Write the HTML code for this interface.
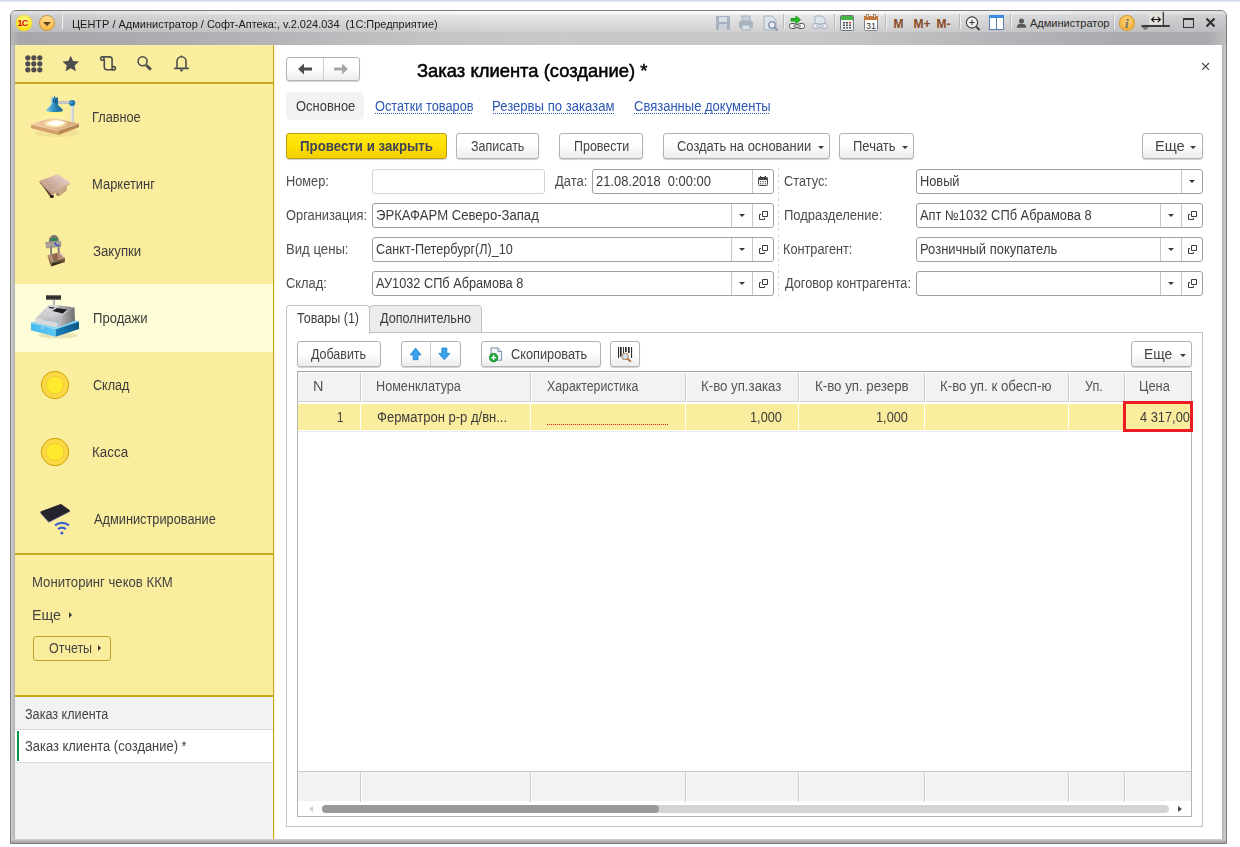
<!DOCTYPE html>
<html lang="ru">
<head>
<meta charset="utf-8">
<title>Заказ клиента (создание) *</title>
<style>
html,body{margin:0;padding:0;}
body{width:1240px;height:847px;overflow:hidden;background:#fff;position:relative;
 font-family:"Liberation Sans",sans-serif;font-size:13px;color:#333;}
.abs,.abs *{box-sizing:border-box;}
.a{position:absolute;white-space:nowrap;}
#topstrip{left:0;top:0;width:1240px;height:2px;background:linear-gradient(#c6d0e5,#f2f4f9);}
#win{left:10px;top:10px;width:1217px;height:834px;border:1px solid #7d7d7d;border-radius:6px 6px 0 0;
 background:linear-gradient(90deg,#d4d4d4 0,#c6c6c6 1px,#bcbcbc 3px,#a9aaac 4px,#a9aaac 1211px,#b7b8ba 1212px,#c1c1c1 1213px,#cdcdcd 1215px);box-sizing:border-box;overflow:hidden;}
#tb1{left:0;top:0;width:1215px;height:21px;background:linear-gradient(90deg,rgba(110,112,125,.22) 0,rgba(110,112,125,.10) 250px,rgba(0,0,0,0) 480px,rgba(0,0,0,0) 820px,rgba(110,112,125,.12) 1050px,rgba(110,112,125,.20) 1215px),linear-gradient(#fcfcfc 0,#f7f7f7 3px,#e7e7e7 4px,#cfcfd0 100%);}
#tb2{left:0;top:21px;width:1215px;height:13px;background:linear-gradient(90deg,#b9babc 0,#a6a7ab 8px,#a9aaae 100px,#b4b4b8 250px,#c4c4c6 420px,#c9c9c9 550px,#c8c8c8 800px,#b4b4b8 1000px,#a9aaae 1120px,#a9aaae 1195px,#bdbdbf 1215px);}
#botframe{left:0;top:828px;width:1215px;height:4px;background:linear-gradient(#d4d4d4,#b2b2b2 50%,#a2a2a2);}
#client{left:15px;top:45px;width:1207px;height:794px;background:#fff;overflow:hidden;}
/* sidebar */
#side{left:0;top:0;width:258px;height:650px;background:#fbed9e;}
#sideb{left:258px;top:0;width:2px;height:794px;background:linear-gradient(90deg,#c9a81c 0,#c9a81c 1px,#f3e6b0 1px,#fdf9e8 2px);}
.hline{background:#c9a81c;height:2px;left:0;width:258px;}
.sec{left:78px;font-size:13px;color:#333;letter-spacing:0.1px;}
#sel{left:0;top:239px;width:258px;height:68px;background:#fffdd8;}
#opened{left:0;top:652px;width:258px;height:142px;background:#f2f2f2;}
/* main */
.btn{height:26px;border:1px solid #b3b3b3;border-radius:3px;background:linear-gradient(#fff,#fff 45%,#ececec);
 box-shadow:0 1px 1px rgba(0,0,0,.18);font-size:13px;color:#444;text-align:center;line-height:23px;letter-spacing:.2px;}
.lbl{color:#4d4d4d;font-size:13px;letter-spacing:0px;}
.fld{height:25px;border:1px solid #a0a0a0;border-radius:3px;background:#fff;font-size:13px;color:#333;line-height:23px;padding-left:4px;}
.fbtn{top:0;width:1px;height:23px;background:#c8c8c8;}
.lnk{color:#2a5db0;font-size:13px;border-bottom:1px dotted #2a5db0;line-height:14px;}
.th{top:0;height:28px;line-height:28px;color:#4d4d4d;font-size:13px;}
.cd{top:0;width:1px;height:430px;background:linear-gradient(#fff 0,#fff 1px,#cdcdcd 1px,#cdcdcd 30px,#fff 30px,#fff 59px,transparent 59px,transparent 400px,#cdcdcd 400px);}
.cd2{top:0;width:1px;height:430px;background:linear-gradient(#fff 0,#fff 30px,transparent 30px,transparent 400px,#fbfbfb 400px);}
.t{white-space:pre;transform-origin:0 0;}
.tri{width:0;height:0;border-left:3px solid transparent;border-right:3px solid transparent;border-top:3px solid #3a3a3a;}
</style>
</head>
<body>
<div id="topstrip" class="a"></div>
<div id="win" class="a abs">
  <div id="tb1" class="a"></div>
  <div id="tb2" class="a"></div>
  <div id="botframe" class="a"></div>
</div>
<div id="titlebar" class="a abs" style="left:0;top:0;width:1240px;height:45px;">

<!-- 1C logo -->
<div class="a" style="left:16px;top:15px;width:16px;height:16px;border-radius:50%;background:radial-gradient(circle at 50% 35%,#fff9a0,#ffe92a 55%,#f6cf00);box-shadow:0 0 1px #d8b800;"></div>
<div class="a" style="left:39px;top:15px;width:16px;height:16px;border-radius:50%;background:linear-gradient(#ffdf94,#ffb640);border:1px solid #c8982e;"></div>
<div class="a" style="left:43px;top:22px;width:0;height:0;border-left:4px solid transparent;border-right:4px solid transparent;border-top:4px solid #5b4320;"></div>
<div class="a" style="left:61px;top:14px;width:1px;height:15px;background:#c6c6c8;"></div>
<div class="a" style="left:62px;top:14px;width:1px;height:15px;background:#f3f3f3;"></div>
<!-- right side icons -->
<svg class="a" style="left:714px;top:14px;" width="260" height="18" viewBox="0 0 260 18">
 <!-- save disabled -->
 <g fill="#a7b1bf" stroke="none">
  <path d="M2 2h13l1 1v13H2z"/><rect x="5" y="3" width="8" height="5" fill="#d9dee5"/><rect x="5" y="10" width="8" height="6" fill="#c9d0da"/>
 </g>
 <!-- print disabled -->
 <g fill="#aab3c0"><rect x="28" y="2" width="8" height="5" fill="#c9d1dc" stroke="#a4b1c2"/><rect x="25" y="7" width="14" height="7" rx="1.5"/><rect x="28" y="11" width="8" height="5" fill="#d8dee6" stroke="#a4b1c2"/></g>
 <!-- preview disabled -->
 <g><path d="M50 2h8l4 4v10H50z" fill="#dfe4ea" stroke="#a4b1c2"/><circle cx="58" cy="11" r="3.2" fill="#eef1f5" stroke="#8d9cb0" stroke-width="1.5"/><path d="M60.5 13.5l3 3" stroke="#8d9cb0" stroke-width="2"/></g>
 <rect x="69" y="0" width="1" height="15" fill="#bbbbbe"/><rect x="70" y="0" width="1" height="15" fill="#efefef"/>
 <!-- link green -->
 <g><path d="M79 2v-0h0M77 4.5h5v-2.5l4.5 3.8l-4.500 3.800v-2.500h-5z" fill="#27c024" stroke="#0f8a10" stroke-width=".8"/><rect x="75.500" y="9.500" width="7" height="5" rx="2" fill="#f4f4f4" stroke="#555"/><rect x="83.500" y="9.500" width="7" height="5" rx="2" fill="#f4f4f4" stroke="#555"/><rect x="80" y="11" width="6" height="2" fill="#fff" stroke="#555" stroke-width=".8"/></g>
 <!-- link disabled -->
 <g><path d="M101 2h7l3 3v5h-10z" fill="#dfe4ea" stroke="#a9b4c3"/><rect x="98.500" y="9.500" width="7" height="5" rx="2" fill="#e2e6ec" stroke="#a3afbf"/><rect x="106.500" y="9.500" width="7" height="5" rx="2" fill="#e2e6ec" stroke="#a3afbf"/><rect x="103" y="11" width="6" height="2" fill="#eef1f5" stroke="#a3afbf" stroke-width=".8"/></g>
 <rect x="120" y="0" width="1" height="15" fill="#bbbbbe"/><rect x="121" y="0" width="1" height="15" fill="#efefef"/>
 <!-- calculator -->
 <g><rect x="126.500" y="1.500" width="13" height="15" rx="1" fill="#eef0f2" stroke="#6f7780"/><rect x="127" y="2" width="12" height="4" fill="#46b24a"/><g fill="#555"><rect x="129" y="8" width="2" height="1.500"/><rect x="132" y="8" width="2" height="1.500"/><rect x="129" y="10.500" width="2" height="1.500"/><rect x="132" y="10.500" width="2" height="1.500"/><rect x="129" y="13" width="2" height="1.500"/><rect x="132" y="13" width="2" height="1.500"/><rect x="135" y="10.500" width="2" height="1.500"/><rect x="135" y="13" width="2" height="1.500"/></g><rect x="135" y="8" width="2" height="1.500" fill="#e03030"/></g>
 <!-- calendar -->
 <g><rect x="150.500" y="2.500" width="13" height="14" rx="1" fill="#fdfdfd" stroke="#7a7f86"/><rect x="150" y="2" width="14" height="4" fill="#c9793a"/><rect x="152.500" y="0.500" width="2" height="3" fill="#e8e8e8" stroke="#8a5a30" stroke-width=".6"/><rect x="159.500" y="0.500" width="2" height="3" fill="#e8e8e8" stroke="#8a5a30" stroke-width=".6"/><text x="157" y="14.500" font-family="Liberation Sans, sans-serif" font-size="9" fill="#333" text-anchor="middle">31</text></g>
 <rect x="171" y="0" width="1" height="15" fill="#bbbbbe"/><rect x="172" y="0" width="1" height="15" fill="#efefef"/>
 <g font-family="Liberation Sans, sans-serif" font-weight="bold" font-size="12" fill="#8a4a1e"><text x="179.500" y="14">M</text><text x="199.500" y="14">M+</text><text x="222.500" y="14">M-</text></g>
 <rect x="245" y="0" width="1" height="15" fill="#bbbbbe"/><rect x="246" y="0" width="1" height="15" fill="#efefef"/>
</svg>
<svg class="a" style="left:964px;top:13px;overflow:visible;" width="260" height="20" viewBox="0 0 260 20">
 <!-- zoom -->
 <g><circle cx="8" cy="9.500" r="5.600" fill="#f4f4f4" stroke="#3d3d3d" stroke-width="1.100"/><path d="M5.300 9.500h5.400M8 6.800v5.400" stroke="#3d3d3d" stroke-width="1.100"/><path d="M12.200 13.700l3.300 3.300" stroke="#3d3d3d" stroke-width="1.900"/></g>
 <!-- panels -->
 <g><rect x="25.500" y="2.500" width="14" height="14" fill="#fff" stroke="#5a7fb0"/><rect x="25" y="2" width="15" height="3" fill="#3b8be0"/><rect x="32" y="5" width="1" height="11" fill="#5a7fb0"/></g>
 <rect x="46" y="1" width="1" height="15" fill="#bbbbbe"/><rect x="47" y="1" width="1" height="15" fill="#efefef"/>
 <!-- user -->
 <g fill="#5a5a5a"><circle cx="57.500" cy="8" r="2.500"/><path d="M52.800 14.800c0-3.200 1.800-4 4.700-4s4.700 .8 4.700 4z"/></g>
 <text x="66" y="14" font-family="Liberation Sans, sans-serif" font-size="11" fill="#2a2a2a" textLength="79.500" lengthAdjust="spacingAndGlyphs">Администратор</text>
 <rect x="149" y="1" width="1" height="15" fill="#bbbbbe"/><rect x="150" y="1" width="1" height="15" fill="#efefef"/>
 <!-- info -->
 <g><circle cx="162.900" cy="10" r="7.700" fill="#f5b642" stroke="#d09a35" stroke-width=".9"/><circle cx="162.900" cy="8.500" r="5.500" fill="#fbd27a" opacity=".55"/><text x="162.700" y="14.600" font-family="Liberation Serif, serif" font-weight="bold" font-style="italic" font-size="13" fill="#6e6e6e" text-anchor="middle">i</text></g>
 <!-- artefact -->
 <g><rect x="185.200" y="-.6" width="13.600" height="12.300" fill="#e4e1da"/><rect x="177.500" y="12" width="28.300" height="2" fill="#3c3c3c"/><rect x="198.700" y="-1.200" width="1.300" height="14" fill="#3c3c3c"/><path d="M177.500 14h7.500l-3.750 3.200z" fill="#7a7a7a"/><path d="M187.600 6.500h8.800M190.300 3.900l-2.700 2.600l2.700 2.600M193.700 3.900l2.700 2.600l-2.700 2.600" stroke="#111" stroke-width="1.100" fill="none"/></g>
 <!-- maximize -->
 <g><rect x="219.500" y="6" width="10" height="8.500" fill="none" stroke="#333"/><rect x="219" y="5" width="11" height="2" fill="#333"/></g>
 <!-- close -->
 <path d="M242.500 5.500l8 8M250.500 5.500l-8 8" stroke="#333" stroke-width="2.200"/>
</svg>

</div>
<div id="client" class="a abs">
  <div id="side" class="a">

<!-- toolbar icons -->
<svg class="a" style="left:8px;top:8px;" width="180" height="22" viewBox="0 0 180 22">
 <g fill="#4d4d4d">
  <circle cx="4.800" cy="4.800" r="2.600"/><circle cx="10.800" cy="4.800" r="2.600"/><circle cx="16.800" cy="4.800" r="2.600"/>
  <circle cx="4.800" cy="10.800" r="2.600"/><circle cx="10.800" cy="10.800" r="2.600"/><circle cx="16.800" cy="10.800" r="2.600"/>
  <circle cx="4.800" cy="16.800" r="2.600"/><circle cx="10.800" cy="16.800" r="2.600"/><circle cx="16.800" cy="16.800" r="2.600"/>
  <path d="M47.700 2.800l2.400 5.200l5.900 .6l-4.400 3.900l1.300 5.700l-5.200-3l-5.200 3l1.300-5.700l-4.400-3.900l5.900-.6z"/>
 </g>
 <g fill="none" stroke="#4d4d4d" stroke-width="1.600" stroke-linejoin="round" stroke-linecap="round">
  <circle cx="79.300" cy="5.500" r="1.700"/>
  <path d="M80 3.900H86.800a2.300 2.300 0 0 1 2.300 2.300V13.600"/>
  <path d="M81.300 7V14a2.800 2.800 0 0 0 2.800 2.800H90"/>
  <circle cx="90.700" cy="15.300" r="1.700"/>
  <circle cx="119.600" cy="8.300" r="4.500"/>
 </g>
 <path d="M123.300 12.300l4.600 4.300" stroke="#4d4d4d" stroke-width="2.900"/>
 <g><path d="M154 14.800v-6.600a4.500 4.500 0 0 1 9 0v6.600" fill="none" stroke="#4d4d4d" stroke-width="1.600"/><path d="M152 15.400h13" stroke="#4d4d4d" stroke-width="1.900" stroke-linecap="round"/><path d="M156.300 16.600h4.400l-2.200 2.400z" fill="#4d4d4d"/><path d="M157.300 3.800l1.200-1.800l1.200 1.800z" fill="#4d4d4d"/></g>
</svg>
<div class="a hline" style="top:37px;"></div>
<div id="sel" class="a"></div>
<!-- Главное -->
<svg class="a" style="left:16px;top:48px;" width="48" height="48" viewBox="0 0 48 48">
 <defs>
  <linearGradient id="lg1" x1="0" x2="1"><stop offset="0" stop-color="#8fd0ea"/><stop offset=".45" stop-color="#2f8fc0"/><stop offset="1" stop-color="#14608f"/></linearGradient>
  <linearGradient id="lg2" x1="0" y1="0" x2="0" y2="1"><stop offset="0" stop-color="#fff27a" stop-opacity=".95"/><stop offset="1" stop-color="#fff9c0" stop-opacity=".5"/></linearGradient>
  <linearGradient id="lg3" x1="0" x2="1"><stop offset="0" stop-color="#f3c9a6"/><stop offset="1" stop-color="#d6a873"/></linearGradient>
  <radialGradient id="rg1" cx=".5" cy=".5" r=".5"><stop offset="0" stop-color="#fffef0"/><stop offset=".6" stop-color="#fbeab0"/><stop offset="1" stop-color="#e9c08e" stop-opacity="0"/></radialGradient>
 </defs>
 <ellipse cx="26" cy="40" rx="22" ry="4" fill="#e8d58a" opacity=".5"/>
 <path d="M0 31.400L20 24.600L48 30.400L27.300 37.600z" fill="url(#lg3)"/>
 <path d="M0 31.400L27.300 37.600V42L0 35.200z" fill="#d79f6d"/>
 <path d="M27.300 37.600L48 30.400V34.200L27.300 42z" fill="#b98752"/>
 <path d="M0 31.400L27.300 37.600L48 30.400" fill="none" stroke="#f1d3b0" stroke-width=".7"/>
 <ellipse cx="24" cy="30.500" rx="14" ry="5" fill="url(#rg1)"/>
 <path d="M15.500 30.500L25 27.300L35 29.300L25 33z" fill="#fff"/>
 <path d="M15 18.400L32 18.400L35 26.500L11.700 26.500z" fill="url(#lg2)"/>
 <rect x="40.300" y="12" width="2.600" height="17" fill="#c9c9d2"/><rect x="40.300" y="12" width="1" height="17" fill="#eeeef4"/>
 <rect x="27" y="8.300" width="13" height="2.400" fill="#cfcfd8" stroke="#9a9aa8" stroke-width=".4"/>
 <circle cx="41.200" cy="10" r="3.100" fill="#1f78ad"/><circle cx="40.400" cy="9.200" r="1.300" fill="#4aa4d4"/>
 <path d="M20.200 4.500h6.800v7.500h-6.800z" fill="url(#lg1)"/><rect x="22.300" y="6" width=".9" height="4" fill="#0d4468"/><rect x="24.300" y="6" width=".9" height="4" fill="#0d4468"/><rect x="23.200" y="3" width=".8" height="2" fill="#1f78ad"/>
 <path d="M20.200 11.500C19 14 16 15 15 17.500C15 19.500 32 19.500 32 17.500C31 15 28.200 14 27 11.500z" fill="url(#lg1)"/>
</svg>
<!-- Маркетинг -->
<svg class="a" style="left:16px;top:115px;" width="48" height="48" viewBox="0 0 48 48">
 <defs><linearGradient id="mg1" x1="0" y1="1" x2="1" y2="0"><stop offset="0" stop-color="#ad8673"/><stop offset=".55" stop-color="#d2b3a4"/><stop offset="1" stop-color="#eddcd3"/></linearGradient></defs>
 <path d="M25.300 32.200L36 25.500L35.600 30.800L28.200 36.300L25.300 35.300z" fill="#c6a884"/>
 <path d="M25.300 32.200L28.200 33.400V36.300L25.300 35.300z" fill="#a88a68"/>
 <path d="M10.300 24.300L20.800 35.300L22.500 35V37L19.800 37.600z" fill="#4a3428"/>
 <path d="M19.300 35.600h3.200v2.200h-3.200z" fill="#17110d"/>
 <path d="M8.500 21.100L20.800 33.800V35.600L8.800 23z" fill="#8a6a58"/>
 <path d="M20.800 33.800L38.700 22.700V24.300L20.800 35.600z" fill="#c4a58e"/>
 <path d="M9 20.800Q8 21.300 9 22.300L20 33.500Q21 34.300 22 33.600L38.200 23.300Q39.200 22.500 38.200 21.800L27.500 14.600Q26.700 14 25.700 14.500z" fill="url(#mg1)"/>
 <path d="M11.500 21.600L21 31.300L34.500 22.600" fill="none" stroke="#ecdcd2" stroke-width=".6" opacity=".75"/>
</svg>
<!-- Закупки -->
<svg class="a" style="left:16px;top:182px;" width="48" height="48" viewBox="0 0 48 48">
 <defs><linearGradient id="zg1" x1="0" y1="0" x2="0" y2="1"><stop offset="0" stop-color="#9c7c5c"/><stop offset=".45" stop-color="#5a4330"/><stop offset="1" stop-color="#21160e"/></linearGradient></defs>
 <path d="M17.800 15C17.800 6 27.800 6 27.800 14z" fill="#7a7772"/>
 <rect x="20" y="11.300" width="6" height="2.600" fill="#1f8a50"/>
 <path d="M14.600 15.600L29.600 14.200L30 19.300L15.600 21z" fill="#aaa196" stroke="#777" stroke-width=".5"/>
 <path d="M24.400 15l1.500 2.200h-3z" fill="#2b3fc0"/><rect x="24.500" y="17.800" width="4" height="1.200" fill="#3248c8"/>
 <rect x="19.200" y="20" width="1.800" height="12" fill="#7d7a76"/><rect x="26.700" y="19.500" width="1.900" height="9" fill="#7d7a76"/>
 <path d="M16.300 28.200L29.300 25.300L34.100 30.500L20.500 35.500z" fill="#b98f78"/>
 <path d="M21 27.200L26.500 26L27 33L22.500 34.500z" fill="#8d6850"/>
 <path d="M29.300 25.300L34.100 30.500V31.500L29 26.500z" fill="#f3f0ea"/>
 <path d="M16.300 28.200L20.500 35.500L20.200 39.600L18.900 36.300z" fill="#7a5a48"/>
 <path d="M20.500 35.500L34.100 30.500L33.800 35L20.200 39.600z" fill="url(#zg1)"/>
 <path d="M21 35.800L27 33.600" stroke="#5a9a5a" stroke-width=".8"/>
</svg>
<!-- Продажи -->
<svg class="a" style="left:16px;top:249px;" width="48" height="48" viewBox="0 0 48 48">
 <defs>
  <linearGradient id="pg1" x1="0" x2="1"><stop offset="0" stop-color="#44b9ec"/><stop offset="1" stop-color="#5fc8f4"/></linearGradient>
  <linearGradient id="pg2" x1="0" x2="1"><stop offset="0" stop-color="#1a7fbb"/><stop offset="1" stop-color="#0c5688"/></linearGradient>
  <linearGradient id="pg3" x1="0" y1="0" x2="1" y2="1"><stop offset="0" stop-color="#e4e4e6"/><stop offset="1" stop-color="#a9aaad"/></linearGradient>
  <linearGradient id="pg4" x1="0" x2="1"><stop offset="0" stop-color="#c6c6c9"/><stop offset=".45" stop-color="#9d9da0"/><stop offset="1" stop-color="#6c6c6f"/></linearGradient><linearGradient id="pg6" x1="0" x2="1"><stop offset="0" stop-color="#b9b9bc"/><stop offset="1" stop-color="#7f7f82"/></linearGradient>
  <linearGradient id="pg5" x1="0" y1="0" x2="0" y2="1"><stop offset="0" stop-color="#555"/><stop offset=".5" stop-color="#222"/><stop offset="1" stop-color="#666"/></linearGradient>
 </defs>
 <ellipse cx="27" cy="41.500" rx="20" ry="3" fill="#d8d29a" opacity=".55"/>
 <path d="M0 28.800L22 22L48 27.200L24.700 35z" fill="#6fd0f6"/>
 <path d="M0 28.800L24.700 35V42.800L0 36.300z" fill="url(#pg1)"/>
 <path d="M24.700 35L48 27.200V35L24.700 42.800z" fill="url(#pg2)"/>
 <path d="M0 28.800L24.700 35L48 27.200" fill="none" stroke="#9fe0fa" stroke-width=".6"/>
 <circle cx="11.300" cy="34" r=".9" fill="#ddd"/>
 <path d="M4.300 24.600V29L26.300 33.800V28.500z" fill="#d9d9db"/>
 <path d="M27.300 28.500C30 22 36 16 43.500 13.500L44 26.500L26.300 33.800z" fill="url(#pg4)"/>
 <path d="M17.600 10.900L30 11.500L43.500 13.500C36 16 30 22 27.300 28.500L4.300 24.600z" fill="url(#pg3)"/>
 <path d="M28 11.400L43.500 13.500C40.500 14.500 38 15.800 36 17.300L26 13.900z" fill="url(#pg6)"/>
 <path d="M9 21.500l4.500-5 14.500 2.800-3.500 5.500z" fill="#c3c4c7"/>
 <path d="M10 20.500l13.500 2.600M12 18.600l14 2.700M14 16.800l13.800 2.700M13 16.500l-3.500 4M16.500 17.200l-3.500 4M20 17.900l-3.500 4M23.500 18.600l-3.500 4" stroke="#ebebed" stroke-width=".5"/>
 <path d="M26 13.900L36 15.500L31.900 19.400L21.500 17.100z" fill="#1d1d1f"/>
 <path d="M18.500 12.800l5 .6-1 1.300-5-.7z" fill="#333"/>
 <rect x="21.300" y="5.500" width="2.700" height="5.500" fill="#d5d5d8"/><rect x="22.800" y="5.500" width="1.200" height="5.500" fill="#a9a9ad"/>
 <rect x="15" y="1.200" width="15" height="4.700" fill="url(#pg5)"/>
</svg>
<!-- Склад -->
<svg class="a" style="left:25px;top:325px;" width="30" height="30" viewBox="0 0 30 30"><circle cx="15" cy="15" r="13.700" fill="#fdd845" stroke="#c7a30a" stroke-width="1"/><circle cx="15" cy="15" r="8.800" fill="#ffe92f" stroke="#efc631" stroke-width=".8"/></svg>
<!-- Касса -->
<svg class="a" style="left:25px;top:392px;" width="30" height="30" viewBox="0 0 30 30"><circle cx="15" cy="15" r="13.700" fill="#fdd845" stroke="#c7a30a" stroke-width="1"/><circle cx="15" cy="15" r="8.800" fill="#ffe92f" stroke="#efc631" stroke-width=".8"/></svg>
<!-- Администрирование -->
<svg class="a" style="left:16px;top:450px;" width="48" height="48" viewBox="0 0 48 48">
 <path d="M9.100 18.300L17.600 28.100L39 17V15.800z" fill="#9a9aae"/>
 <path d="M10 16.300Q9 17.100 9.800 18L17 26Q17.800 26.900 18.800 26.400L38.300 16.400Q39.300 15.800 38.500 15L30.800 9.400Q30 8.800 29 9.200z" fill="#25232b"/>
 <g fill="none" stroke="#3b60d0" stroke-width="2.300"><path d="M24 30.500a10.500 10.500 0 0 1 14 0"/><path d="M27.200 34.200a5.700 5.700 0 0 1 7.600 0"/></g>
 <circle cx="30.900" cy="37.900" r="1.500" fill="#3b60d0"/>
</svg>
<div class="a hline" style="top:508px;"></div>
<div class="a" style="left:54px;top:567px;width:0;height:0;border-top:3px solid transparent;border-bottom:3px solid transparent;border-left:3px solid #333;"></div>
<div class="a" style="left:18px;top:591px;width:78px;height:25px;border:1px solid #c3a52a;border-radius:3px;box-sizing:border-box;"></div>
<div class="a" style="left:83px;top:600px;width:0;height:0;border-top:3px solid transparent;border-bottom:3px solid transparent;border-left:3px solid #333;"></div>
<div class="a hline" style="top:650px;"></div>

  </div>
  <div id="opened" class="a">

<div class="a" style="left:0;top:0;width:258px;height:32px;"></div>
<div class="a" style="left:0;top:32px;width:258px;height:1px;background:#d9d9d9;"></div>
<div class="a" style="left:0;top:33px;width:258px;height:32px;background:#fff;"></div>
<div class="a" style="left:2px;top:34px;width:2px;height:30px;background:#009646;"></div>
<div class="a" style="left:0;top:65px;width:258px;height:1px;background:#d9d9d9;"></div>

  </div>
  <div id="sideb" class="a"></div>
  <div id="main" class="a" style="left:0;top:0;width:1207px;height:794px;">

<!-- nav buttons (client coords = abs - (15,45)) -->
<div class="a btn" style="left:271px;top:12px;width:74px;height:24px;"></div>
<div class="a" style="left:308px;top:13px;width:1px;height:22px;background:#cfcfcf;"></div>
<svg class="a" style="left:271px;top:12px;" width="74" height="24" viewBox="0 0 74 24">
 <path d="M12 12l6-5.500v4h8v3h-8v4z" fill="#4d4d4d"/>
 <path d="M62 12l-6-5.500v4h-8v3h8v4z" fill="#a8a8a8"/>
</svg>
<svg class="a" style="left:1185px;top:16px;" width="12" height="12" viewBox="0 0 12 12"><path d="M2.100 2l6.900 6.900M9 2l-6.900 6.900" stroke="#4a4a4a" stroke-width="1.200"/></svg>
<!-- page links -->
<div class="a" style="left:271px;top:47px;width:78px;height:28px;background:#f2f2f2;border-radius:5px;"></div>
<!-- command bar -->
<div class="a btn" style="left:271px;top:88px;width:161px;background:linear-gradient(#ffe818,#ffe000 50%,#f2cf00);border-color:#b99c18;color:#3f4457;font-weight:bold;letter-spacing:.1px;"></div>
<div class="a btn" style="left:441px;top:88px;width:83px;"></div>
<div class="a btn" style="left:544px;top:88px;width:84px;"></div>
<div class="a btn" style="left:648px;top:88px;width:167px;text-align:left;padding-left:13px;"></div>
<div class="a tri" style="left:803px;top:101px;"></div>
<div class="a btn" style="left:824px;top:88px;width:75px;text-align:left;padding-left:13px;"></div>
<div class="a tri" style="left:887px;top:101px;"></div>
<div class="a btn" style="left:1127px;top:88px;width:61px;text-align:left;padding-left:13px;"></div>
<div class="a tri" style="left:1175px;top:101px;"></div>
<!-- form left -->
<div class="a fld" style="left:357px;top:124px;width:173px;border-color:#d4d4d4;"></div>
<div class="a fld" style="left:577px;top:124px;width:182px;white-space:pre;padding-left:3px;"><div class="a fbtn" style="left:159px;"></div></div>
<svg class="a" style="left:743px;top:131px;" width="11" height="11" viewBox="0 0 11 11"><rect x=".5" y="1.500" width="9" height="8" rx="1" fill="#fff" stroke="#444"/><rect x=".5" y="1.500" width="9" height="2.500" fill="#444"/><rect x="2" y="0" width="1.300" height="2.500" fill="#444"/><rect x="6.700" y="0" width="1.300" height="2.500" fill="#444"/><g fill="#555"><rect x="2" y="5" width="1.200" height="1.200"/><rect x="4.400" y="5" width="1.200" height="1.200"/><rect x="6.800" y="5" width="1.200" height="1.200"/><rect x="2" y="7.200" width="1.200" height="1.200"/><rect x="4.400" y="7.200" width="1.200" height="1.200"/><rect x="6.800" y="7.200" width="1.200" height="1.200"/></g></svg>
<div class="a fld" style="left:357px;top:158px;width:402px;"><div class="a fbtn" style="left:358px;"></div><div class="a fbtn" style="left:379px;"></div></div>
<div class="a fld" style="left:357px;top:192px;width:402px;"><div class="a fbtn" style="left:358px;"></div><div class="a fbtn" style="left:379px;"></div></div>
<div class="a fld" style="left:357px;top:226px;width:402px;"><div class="a fbtn" style="left:358px;"></div><div class="a fbtn" style="left:379px;"></div></div>
<!-- dashed separator -->
<div class="a" style="left:763px;top:123px;width:1px;height:130px;background:repeating-linear-gradient(#d4d4d4 0,#d4d4d4 3px,#fff 3px,#fff 6px);"></div>
<!-- form right -->
<div class="a fld" style="left:901px;top:124px;width:287px;"><div class="a fbtn" style="left:264px;"></div></div>
<div class="a fld" style="left:901px;top:158px;width:287px;"><div class="a fbtn" style="left:243px;"></div><div class="a fbtn" style="left:264px;"></div></div>
<div class="a fld" style="left:901px;top:192px;width:287px;"><div class="a fbtn" style="left:243px;"></div><div class="a fbtn" style="left:264px;"></div></div>
<div class="a fld" style="left:901px;top:226px;width:287px;"><div class="a fbtn" style="left:243px;"></div><div class="a fbtn" style="left:264px;"></div></div>
<!-- dropdown arrows & open icons -->
<div id="ficons">
<div class="a tri" style="left:724px;top:169px;"></div><svg class="a" style="left:744px;top:166px;" width="10" height="10" viewBox="0 0 10 10"><path d="M3.500 .5h5v5h-5z" fill="none" stroke="#3c3c3c"/><path d="M2 3.500h-1.500v5h5v-1.500" fill="none" stroke="#3c3c3c"/></svg>
<div class="a tri" style="left:724px;top:203px;"></div><svg class="a" style="left:744px;top:200px;" width="10" height="10" viewBox="0 0 10 10"><path d="M3.500 .5h5v5h-5z" fill="none" stroke="#3c3c3c"/><path d="M2 3.500h-1.500v5h5v-1.500" fill="none" stroke="#3c3c3c"/></svg>
<div class="a tri" style="left:724px;top:237px;"></div><svg class="a" style="left:744px;top:234px;" width="10" height="10" viewBox="0 0 10 10"><path d="M3.500 .5h5v5h-5z" fill="none" stroke="#3c3c3c"/><path d="M2 3.500h-1.500v5h5v-1.500" fill="none" stroke="#3c3c3c"/></svg>
<div class="a tri" style="left:1174px;top:135px;"></div>
<div class="a tri" style="left:1153px;top:169px;"></div><svg class="a" style="left:1173px;top:166px;" width="10" height="10" viewBox="0 0 10 10"><path d="M3.500 .5h5v5h-5z" fill="none" stroke="#3c3c3c"/><path d="M2 3.500h-1.500v5h5v-1.500" fill="none" stroke="#3c3c3c"/></svg>
<div class="a tri" style="left:1153px;top:203px;"></div><svg class="a" style="left:1173px;top:200px;" width="10" height="10" viewBox="0 0 10 10"><path d="M3.500 .5h5v5h-5z" fill="none" stroke="#3c3c3c"/><path d="M2 3.500h-1.500v5h5v-1.500" fill="none" stroke="#3c3c3c"/></svg>
<div class="a tri" style="left:1153px;top:237px;"></div><svg class="a" style="left:1173px;top:234px;" width="10" height="10" viewBox="0 0 10 10"><path d="M3.500 .5h5v5h-5z" fill="none" stroke="#3c3c3c"/><path d="M2 3.500h-1.500v5h5v-1.500" fill="none" stroke="#3c3c3c"/></svg>
</div>
<!-- tabs -->
<div class="a" style="left:271px;top:287px;width:917px;height:495px;border:1px solid #c2c2c2;background:#fff;"></div>
<div class="a" style="left:354px;top:260px;width:113px;height:28px;border:1px solid #c2c2c2;border-radius:4px 4px 0 0;background:#ececec;"></div>
<div class="a" style="left:271px;top:260px;width:84px;height:29px;border:1px solid #c2c2c2;border-bottom:none;border-radius:4px 4px 0 0;background:#fff;"></div>
<!-- table toolbar -->
<div class="a btn" style="left:282px;top:296px;width:84px;"></div>
<div class="a btn" style="left:386px;top:296px;width:60px;"></div>
<div class="a" style="left:415px;top:297px;width:1px;height:24px;background:#cfcfcf;"></div>
<svg class="a" style="left:386px;top:296px;" width="59" height="26" viewBox="0 0 59 26">
 <path d="M14.600 7.100l5.400 6.800h-3v4.800h-4.800v-4.800h-3z" fill="#39a3ec" stroke="#2186d6" stroke-width=".9" stroke-linejoin="round"/>
 <path d="M43.400 18.700l5.500-6.300h-3.100v-5.300h-4.900v5.300h-3z" fill="#39a3ec" stroke="#2186d6" stroke-width=".9" stroke-linejoin="round"/>
</svg>
<div class="a btn" style="left:466px;top:296px;width:120px;text-align:left;padding-left:29px;"></div>
<svg class="a" style="left:472px;top:300px;" width="18" height="18" viewBox="0 0 18 18"><path d="M4 2.900h7l3.600 3.600v8.700h-10.600z" fill="#f0f3f7" stroke="#7c8fac"/><path d="M11 2.900v3.600h3.600" fill="#dfe5ee" stroke="#7c8fac"/><circle cx="6.600" cy="12.600" r="4.300" fill="#25a53a" stroke="#168a2a" stroke-width=".7"/><path d="M4.100 12.600h5M6.600 10.100v5" stroke="#fff" stroke-width="1.400"/></svg>
<div class="a btn" style="left:595px;top:296px;width:30px;"></div>
<svg class="a" style="left:602px;top:300px;" width="18" height="18" viewBox="0 0 18 18"><g fill="#2e2e2e"><rect x="1" y="2" width="1.100" height="11"/><rect x="3" y="2" width="1.700" height="9.500"/><rect x="6" y="2" width="1" height="6"/><rect x="8" y="2" width="1.700" height="5"/><rect x="11" y="2" width="1.700" height="6"/><rect x="14" y="2" width="1.100" height="11"/></g><circle cx="8.100" cy="11.400" r="3.100" fill="#cfe0f8" stroke="#c48f60" stroke-width="1.100"/><path d="M10.500 13.700l2.800 2.500" stroke="#b87a48" stroke-width="2" stroke-linecap="round"/></svg>
<div class="a btn" style="left:1116px;top:296px;width:61px;text-align:left;padding-left:13px;"></div>
<div class="a tri" style="left:1165px;top:309px;"></div>
<!-- table -->
<div id="tbl" class="a" style="left:282px;top:326px;width:895px;height:446px;border:1px solid #b4b4b4;border-top-color:#a2a2a2;background:#fff;overflow:hidden;">
 <div class="a" style="left:0;top:1px;width:893px;height:29px;background:#f2f2f2;border-bottom:1px solid #cfcfcf;"></div>
 <!-- row -->
 <div class="a" style="left:0;top:32px;width:893px;height:26px;background:#fbed9e;"></div>
 <div class="a" style="left:0;top:59px;width:893px;height:1px;background:#e9e9e9;"></div>
 <div class="a" style="left:249px;top:52px;width:122px;height:1px;background:repeating-linear-gradient(90deg,#e8202a 0,#e8202a 1px,transparent 1px,transparent 2px);"></div>
 <!-- footer -->
 <div class="a" style="left:0;top:399px;width:893px;height:30px;background:#f2f2f2;border-top:1px solid #c8c8c8;"></div>
 <!-- column dividers -->
 <div id="cols">
 <div class="a cd" style="left:62px;"></div><div class="a cd2" style="left:63px;"></div><div class="a cd" style="left:232px;"></div><div class="a cd2" style="left:233px;"></div><div class="a cd" style="left:387px;"></div><div class="a cd2" style="left:388px;"></div><div class="a cd" style="left:500px;"></div><div class="a cd2" style="left:501px;"></div><div class="a cd" style="left:626px;"></div><div class="a cd2" style="left:627px;"></div><div class="a cd" style="left:770px;"></div><div class="a cd2" style="left:771px;"></div><div class="a cd" style="left:826px;"></div><div class="a cd2" style="left:827px;"></div>
 </div>
 <!-- scrollbar -->
 <div class="a" style="left:11px;top:434px;width:0;height:0;border-top:3px solid transparent;border-bottom:3px solid transparent;border-right:4px solid #cfcfcf;"></div>
 <div class="a" style="left:24px;top:433px;width:847px;height:8px;border-radius:4px;background:#d4d4d4;"></div>
 <div class="a" style="left:24px;top:433px;width:337px;height:8px;border-radius:4px;background:#9a9a9a;"></div>
 <div class="a" style="left:880px;top:433.5px;width:0;height:0;border-top:3.5px solid transparent;border-bottom:3.5px solid transparent;border-left:4.5px solid #4a4a4a;"></div>
</div>
<div class="a" style="left:1108px;top:356px;width:70px;height:31px;border:3px solid #ec1c24;"></div>

  </div>
</div>
<div id="texts" class="a" style="left:0;top:0;width:1240px;height:847px;color:#3c3c3c;will-change:transform;">
<div class="a t" style="left:92.36px;top:109px;font-size:14px;line-height:16px;transform:scaleX(0.9107);">Главное</div>
<div class="a t" style="left:92.34px;top:176px;font-size:14px;line-height:16px;transform:scaleX(0.9248);">Маркетинг</div>
<div class="a t" style="left:93.03px;top:243px;font-size:14px;line-height:16px;transform:scaleX(0.9455);">Закупки</div>
<div class="a t" style="left:92.57px;top:310px;font-size:14px;line-height:16px;transform:scaleX(0.9345);">Продажи</div>
<div class="a t" style="left:92.83px;top:377px;font-size:14px;line-height:16px;transform:scaleX(0.8987);">Склад</div>
<div class="a t" style="left:92.30px;top:444px;font-size:14px;line-height:16px;transform:scaleX(0.9589);">Касса</div>
<div class="a t" style="left:93.50px;top:511px;font-size:14px;line-height:16px;transform:scaleX(0.9122);">Администрирование</div>
<div class="a t" style="left:32.13px;top:574px;font-size:14px;line-height:16px;transform:scaleX(0.9383);color:#444">Мониторинг чеков ККМ</div>
<div class="a t" style="left:32.03px;top:607px;font-size:14px;line-height:16px;transform:scaleX(1.0189);color:#444">Еще</div>
<div class="a t" style="left:49.03px;top:640px;font-size:14px;line-height:16px;transform:scaleX(0.8898);color:#444">Отчеты</div>
<div class="a t" style="left:24.85px;top:706px;font-size:14px;line-height:16px;transform:scaleX(0.9011);color:#444">Заказ клиента</div>
<div class="a t" style="left:24.84px;top:738px;font-size:14px;line-height:16px;transform:scaleX(0.9221);color:#444">Заказ клиента (создание) *</div>
<div class="a t" style="left:71.50px;top:17px;font-size:11px;line-height:14px;color:#1a1a1a;transform:scaleX(0.9979);">ЦЕНТР / Администратор / Софт-Аптека:, v.2.024.034  (1С:Предприятие)</div>
<div class="a t" style="left:417.25px;top:60px;font-size:18.2px;line-height:22px;color:#000;-webkit-text-stroke:.5px #000;transform:scaleX(1.0121);">Заказ клиента (создание) *</div>
<div class="a t" style="left:295.81px;top:98px;font-size:14px;line-height:16px;transform:scaleX(0.9243);">Основное</div>
<div class="a t" style="left:374.62px;top:98px;font-size:14px;line-height:16px;color:#2b57b3;transform:scaleX(0.9127);">Остатки товаров</div>
<div class="a t" style="left:491.83px;top:98px;font-size:14px;line-height:16px;color:#2b57b3;transform:scaleX(0.9362);">Резервы по заказам</div>
<div class="a t" style="left:633.60px;top:98px;font-size:14px;line-height:16px;color:#2b57b3;transform:scaleX(0.9294);">Связанные документы</div>
<div class="a t" style="left:299.55px;top:138px;font-size:14px;line-height:16px;font-weight:bold;transform:scaleX(0.9477);color:#3f4457">Провести и закрыть</div>
<div class="a t" style="left:470.85px;top:138px;font-size:14px;line-height:16px;transform:scaleX(0.8919);color:#444">Записать</div>
<div class="a t" style="left:573.61px;top:138px;font-size:14px;line-height:16px;transform:scaleX(0.8917);color:#444">Провести</div>
<div class="a t" style="left:677.31px;top:138px;font-size:14px;line-height:16px;transform:scaleX(0.9233);color:#444">Создать на основании</div>
<div class="a t" style="left:852.97px;top:138px;font-size:14px;line-height:16px;transform:scaleX(0.9288);color:#444">Печать</div>
<div class="a t" style="left:1155.10px;top:138px;font-size:14px;line-height:16px;transform:scaleX(1.0415);color:#444">Еще</div>
<div class="a t" style="left:285.76px;top:173px;font-size:14px;line-height:16px;transform:scaleX(0.9124);color:#4d4d4d">Номер:</div>
<div class="a t" style="left:555.00px;top:173px;font-size:14px;line-height:16px;transform:scaleX(0.9254);color:#4d4d4d">Дата:</div>
<div class="a t" style="left:595.61px;top:173px;font-size:14px;line-height:16px;transform:scaleX(0.9225);">21.08.2018  0:00:00</div>
<div class="a t" style="left:286.21px;top:207px;font-size:14px;line-height:16px;transform:scaleX(0.9171);color:#4d4d4d">Организация:</div>
<div class="a t" style="left:376.20px;top:207px;font-size:14px;line-height:16px;transform:scaleX(0.9366);">ЭРКАФАРМ Северо-Запад</div>
<div class="a t" style="left:285.73px;top:241px;font-size:14px;line-height:16px;transform:scaleX(0.9391);color:#4d4d4d">Вид цены:</div>
<div class="a t" style="left:376.22px;top:241px;font-size:14px;line-height:16px;transform:scaleX(0.9025);">Санкт-Петербург(Л)_10</div>
<div class="a t" style="left:286.21px;top:275px;font-size:14px;line-height:16px;transform:scaleX(0.9183);color:#4d4d4d">Склад:</div>
<div class="a t" style="left:376.20px;top:275px;font-size:14px;line-height:16px;transform:scaleX(0.9104);">АУ1032 СПб Абрамова 8</div>
<div class="a t" style="left:783.82px;top:173px;font-size:14px;line-height:16px;transform:scaleX(0.9109);color:#4d4d4d">Статус:</div>
<div class="a t" style="left:919.56px;top:173px;font-size:14px;line-height:16px;transform:scaleX(0.9146);">Новый</div>
<div class="a t" style="left:783.57px;top:207px;font-size:14px;line-height:16px;transform:scaleX(0.9285);color:#4d4d4d">Подразделение:</div>
<div class="a t" style="left:920.10px;top:207px;font-size:14px;line-height:16px;transform:scaleX(0.9201);">Апт №1032 СПб Абрамова 8</div>
<div class="a t" style="left:783.36px;top:241px;font-size:14px;line-height:16px;transform:scaleX(0.9098);color:#4d4d4d">Контрагент:</div>
<div class="a t" style="left:919.54px;top:241px;font-size:14px;line-height:16px;transform:scaleX(0.9281);">Розничный покупатель</div>
<div class="a t" style="left:784.50px;top:275px;font-size:14px;line-height:16px;transform:scaleX(0.9076);color:#4d4d4d">Договор контрагента:</div>
<div class="a t" style="left:296.78px;top:310px;font-size:14px;line-height:16px;transform:scaleX(0.8971);">Товары (1)</div>
<div class="a t" style="left:380.00px;top:310px;font-size:14px;line-height:16px;transform:scaleX(0.9027);">Дополнительно</div>
<div class="a t" style="left:311.30px;top:346px;font-size:14px;line-height:16px;transform:scaleX(0.8898);color:#444">Добавить</div>
<div class="a t" style="left:510.62px;top:346px;font-size:14px;line-height:16px;transform:scaleX(0.9119);color:#444">Скопировать</div>
<div class="a t" style="left:1144.26px;top:346px;font-size:14px;line-height:16px;transform:scaleX(0.9925);color:#444">Еще</div>
<div class="a t" style="left:313.21px;top:378px;font-size:14px;line-height:16px;transform:scaleX(1.0323);color:#555">N</div>
<div class="a t" style="left:376.37px;top:378px;font-size:14px;line-height:16px;transform:scaleX(0.9035);color:#555">Номенклатура</div>
<div class="a t" style="left:546.66px;top:378px;font-size:14px;line-height:16px;transform:scaleX(0.8783);color:#555">Характеристика</div>
<div class="a t" style="left:701.32px;top:378px;font-size:14px;line-height:16px;transform:scaleX(0.9465);color:#555">К-во уп.заказ</div>
<div class="a t" style="left:814.51px;top:378px;font-size:14px;line-height:16px;transform:scaleX(0.9488);color:#555">К-во уп. резерв</div>
<div class="a t" style="left:940.41px;top:378px;font-size:14px;line-height:16px;transform:scaleX(0.9498);color:#555">К-во уп. к обесп-ю</div>
<div class="a t" style="left:1084.95px;top:378px;font-size:14px;line-height:16px;transform:scaleX(0.9000);color:#555">Уп.</div>
<div class="a t" style="left:1139.16px;top:378px;font-size:14px;line-height:16px;transform:scaleX(0.9138);color:#555">Цена</div>
<div class="a t" style="left:336.68px;top:409px;font-size:14px;line-height:16px;transform:scaleX(0.8200);">1</div>
<div class="a t" style="left:377.30px;top:409px;font-size:14px;line-height:16px;transform:scaleX(0.9297);">Ферматрон р-р д/вн...</div>
<div class="a t" style="left:749.89px;top:409px;font-size:14px;line-height:16px;transform:scaleX(0.9104);">1,000</div>
<div class="a t" style="left:876.09px;top:409px;font-size:14px;line-height:16px;transform:scaleX(0.9104);">1,000</div>
<div class="a t" style="left:1139.87px;top:409px;font-size:14px;line-height:16px;transform:scaleX(0.9153);">4 317,00</div>
<div class="a" style="left:375px;top:113px;width:98px;height:1px;background:repeating-linear-gradient(90deg,#2b57b3 0,#2b57b3 1px,transparent 1px,transparent 2px);"></div>
<div class="a" style="left:493px;top:113px;width:121px;height:1px;background:repeating-linear-gradient(90deg,#2b57b3 0,#2b57b3 1px,transparent 1px,transparent 2px);"></div>
<div class="a" style="left:634px;top:113px;width:136px;height:1px;background:repeating-linear-gradient(90deg,#2b57b3 0,#2b57b3 1px,transparent 1px,transparent 2px);"></div>
<div class="a" style="left:17.500px;top:18px;font:bold 9px/10px 'Liberation Sans',sans-serif;color:#e30000;letter-spacing:-0.8px;">1С</div>
</div>
</body>
</html>
